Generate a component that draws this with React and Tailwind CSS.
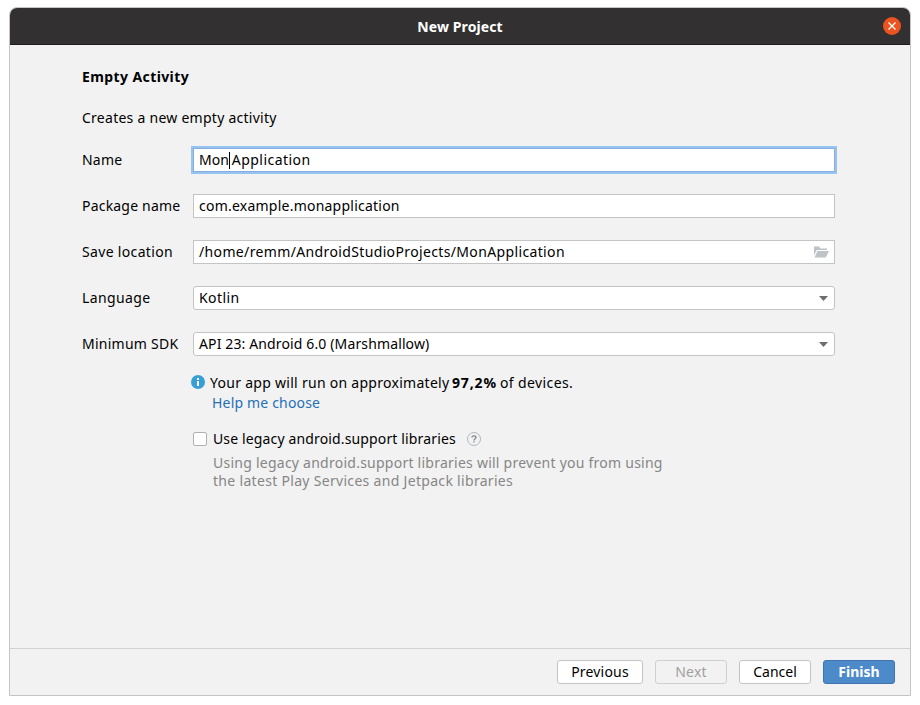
import React from "react";

function Row({ label, labelClass, children }) {
  return (
    <div className="flex h-6 items-center">
      <label className={`w-[111px] shrink-0 whitespace-nowrap ${labelClass}`}>{label}</label>
      {children}
    </div>
  );
}

const field = "flex h-6 w-[642px] items-center border border-[#c4c4c4] bg-white pl-[5px] whitespace-nowrap";

function Caret() {
  return (
    <svg width="9" height="5" viewBox="0 0 9 5" className="mr-[6px] ml-auto">
      <path d="M0 0H9L4.5 5Z" fill="#6e6e6e" />
    </svg>
  );
}

export default function App() {
  return (
    <div className="h-[705px] w-[920px] bg-white pt-[7px] pl-[9px] font-['Noto_Sans',sans-serif] text-[14px] leading-5 text-black">
      <div className="flex h-[689px] w-[902px] flex-col overflow-hidden rounded-t-[8px] border border-[#c4c4c4] bg-[#f2f2f2]">
        <header className="relative flex h-[37px] shrink-0 items-center justify-center border-b border-[#1f1e1e] bg-[#333031] pt-[2px] font-bold text-white">
          <span className="tracking-[0.1px]">New Project</span>
          <svg width="18" height="18" viewBox="0 0 18 18" className="absolute top-[9px] right-[9px]">
            <circle cx="9" cy="9" r="9" fill="#e95420" />
            <path d="M5.5 5.5L12.5 12.5M12.5 5.5L5.5 12.5" stroke="#fff" strokeWidth="1.3" />
          </svg>
        </header>
        <main className="flex grow flex-col pt-[22px] pl-[72px]">
          <h1 className="font-bold tracking-[0.4px]">Empty Activity</h1>
          <p className="mt-[21px] tracking-[0.26px]">Creates a new empty activity</p>
          <div className="mt-5 flex flex-col gap-[22px]">
            <Row label="Name" labelClass="tracking-[0.2px]">
              <div className="flex h-6 w-[642px] items-center border border-[#87afda] bg-white pl-[5px] ring-2 ring-[#97c3f3]">
                <span>Mon</span>
                <i className="h-[17px] w-px bg-black" />
                <span className="ml-[2px] tracking-[0.45px]">Application</span>
              </div>
            </Row>
            <Row label="Package name" labelClass="tracking-[0.2px]">
              <div className={field}><span className="tracking-[0.23px]">com.example.monapplication</span></div>
            </Row>
            <Row label="Save location" labelClass="tracking-[0.33px]">
              <div className={field}>
                <span className="tracking-[0.36px]">/home/remm/AndroidStudioProjects/MonApplication</span>
                <svg width="15" height="12" viewBox="0 0 15 12" className="mr-[5px] ml-auto" fill="#bdc3c7">
                  <path d="M0 0.5H5L6.5 2.5H13V4H2.7L0 9.5Z" />
                  <path d="M3.5 5H15L11.8 11.5H0.5Z" />
                </svg>
              </div>
            </Row>
            <Row label="Language" labelClass="tracking-[0.4px]">
              <div className={`${field} rounded-[3px]`}><span className="tracking-[0.4px]">Kotlin</span><Caret /></div>
            </Row>
            <Row label="Minimum SDK" labelClass="tracking-[0.25px]">
              <div className={`${field} rounded-[3px]`}><span className="tracking-[0.13px]">API 23: Android 6.0 (Marshmallow)</span><Caret /></div>
            </Row>
          </div>
          <div className="mt-[17px] ml-[109px] flex h-5 items-center whitespace-nowrap">
            <svg width="14" height="14" viewBox="0 0 14 14" className="mr-[5px] -mt-[2px]">
              <circle cx="7" cy="7" r="7" fill="#389fd6" />
              <path d="M6 3H8V5H6ZM6 6H8V11H6Z" fill="#fff" />
            </svg>
            <span className="w-[242px] tracking-[0.28px]">Your app will run on approximately</span>
            <b className="w-[48px] tracking-[0.85px]">97,2%</b>
            <span className="tracking-[0.38px]">of devices.</span>
          </div>
          <a className="ml-[130px] tracking-[0.18px] text-[#2470b3]">Help me choose</a>
          <div className="mt-4 ml-[111px] flex h-5 items-center whitespace-nowrap">
            <i className="mr-[6px] size-[14px] rounded-[2px] border border-[#b0b0b0] bg-white" />
            <span className="w-[254px] tracking-[0.14px]">Use legacy android.support libraries</span>
            <svg width="14" height="14" viewBox="0 0 14 14" fill="none">
              <circle cx="7" cy="7" r="6.5" stroke="#b0b7bc" />
              <path d="M5 5.6Q5 3.8 7 3.8Q9 3.8 9 5.5C9 6.7 7 6.8 7 8.4M7 9.3V10.6" stroke="#7f8b91" strokeWidth="1.3" />
            </svg>
          </div>
          <p className="mt-[5px] ml-[131px] leading-[18px] whitespace-nowrap text-[#868686]">
            <span className="tracking-[0.245px]">Using legacy android.support libraries will prevent you from using</span><br />
            <span className="tracking-[0.31px]">the latest Play Services and Jetpack libraries</span>
          </p>
        </main>
        <footer className="flex h-[47px] shrink-0 items-start justify-end gap-3 border-t border-[#d1d1d1] pt-[11px] pr-[15px]">
          <button className="flex h-6 w-[86px] items-center justify-center rounded-[3px] border border-[#c4c4c4] bg-white tracking-[0.2px]">Previous</button>
          <button className="flex h-6 w-[72px] items-center justify-center rounded-[3px] border border-[#cfcfcf] tracking-[0.2px] text-[#a0a0a0]">Next</button>
          <button className="flex h-6 w-[72px] items-center justify-center rounded-[3px] border border-[#c4c4c4] bg-white">Cancel</button>
          <button className="flex h-6 w-[72px] items-center justify-center rounded-[3px] border border-[#4075af] bg-[#4d8ac9] font-bold text-white">Finish</button>
        </footer>
      </div>
    </div>
  );
}
